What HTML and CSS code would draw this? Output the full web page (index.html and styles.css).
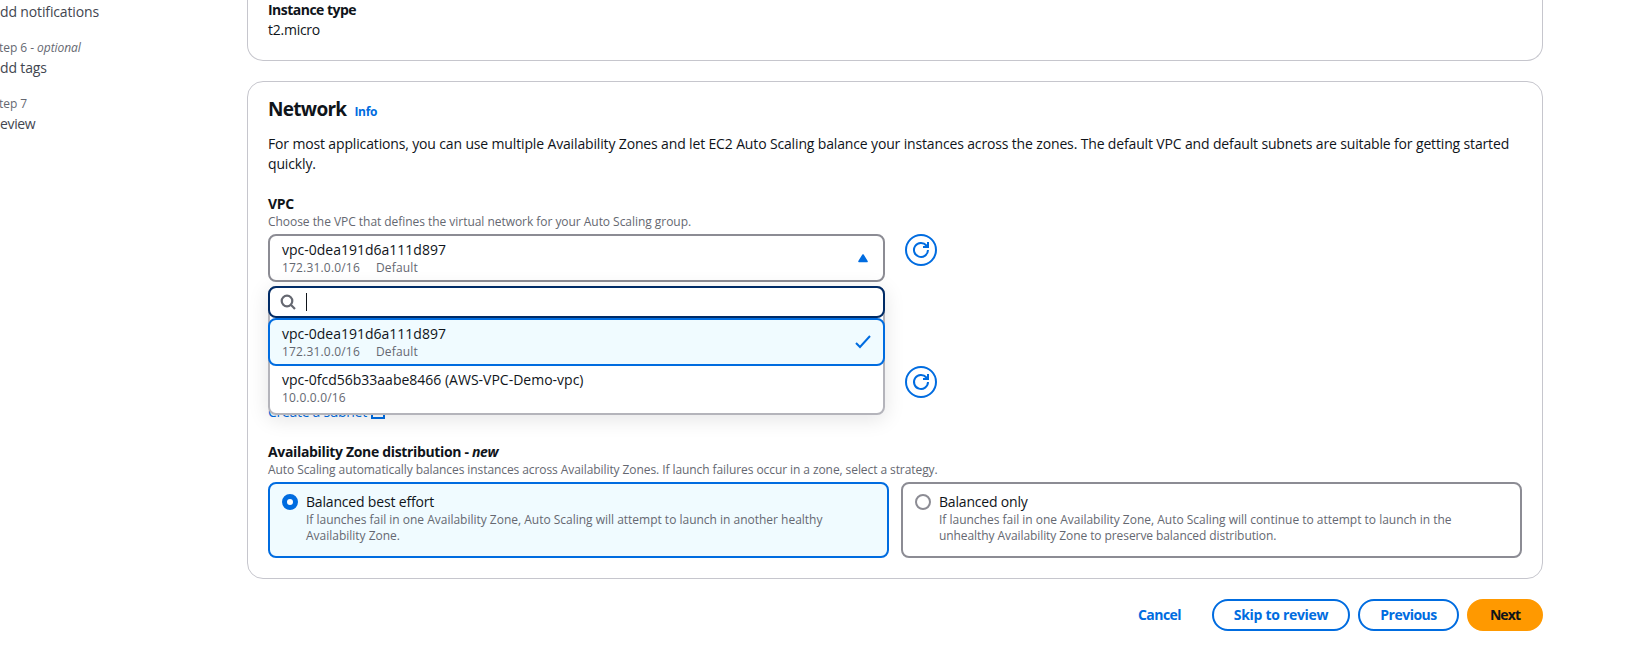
FILE: index.html
```html
<!DOCTYPE html>
<html lang="en">
<head>
<meta charset="utf-8">
<title>Create Auto Scaling group</title>
<link rel="stylesheet" href="styles.css">
</head>
<body>
<div class="layout">
  <nav class="steps">
    <div class="step"><a class="step-link">dd notifications</a></div>
    <div class="step"><span class="step-no">tep 6 - <i>optional</i></span><a class="step-link">dd tags</a></div>
    <div class="step"><span class="step-no">tep 7</span><a class="step-link step-short">eview</a></div>
  </nav>
  <main class="content">
    <section class="card card-top">
      <div class="label">Instance type</div>
      <div class="value">t2.micro</div>
    </section>

    <section class="card card-network">
      <header class="card-header"><h2>Network</h2><a class="info">Info</a></header>
      <p class="description">For most applications, you can use multiple Availability Zones and let EC2 Auto Scaling balance your instances across the zones. The default VPC and default subnets are suitable for getting started quickly.</p>

      <div class="field vpc">
        <div class="label label-short">VPC</div>
        <div class="hint">Choose the VPC that defines the virtual network for your Auto Scaling group.</div>
        <div class="field-row">
          <div class="select">
            <div class="trigger">
              <div>
                <div class="opt-label">vpc-0dea191d6a111d897</div>
                <div class="opt-tags"><span>172.31.0.0/16</span><span>Default</span></div>
              </div>
              <svg class="caret" viewBox="0 0 16 16"><path d="M4 11.500 8 5l4 6.500z" fill="#006ce0" stroke="#006ce0" stroke-width="1.600" stroke-linejoin="round"/></svg>
            </div>
            <div class="dropdown">
              <div class="search">
                <svg class="icon" viewBox="0 0 16 16" fill="none" stroke="#656871" stroke-width="2.200"><circle cx="7" cy="7" r="5.300"/><path d="m10.800 10.800 4.200 4.200"/></svg>
                <span class="cursor"></span>
              </div>
              <div class="option selected">
                <div>
                  <div class="opt-label">vpc-0dea191d6a111d897</div>
                  <div class="opt-tags"><span>172.31.0.0/16</span><span>Default</span></div>
                </div>
                <svg class="icon" viewBox="0 0 16 16" fill="none" stroke="#006ce0" stroke-width="2"><path d="m1 9 4 4 10-11"/></svg>
              </div>
              <div class="option">
                <div>
                  <div class="opt-label">vpc-0fcd56b33aabe8466 (AWS-VPC-Demo-vpc)</div>
                  <div class="opt-tags"><span>10.0.0.0/16</span></div>
                </div>
              </div>
            </div>
          </div>
          <button class="refresh" aria-label="Refresh"><svg viewBox="0 0 16 16" fill="none" stroke="#006ce0" stroke-width="2"><path d="M15 8a7 7 0 1 1-1.600-4.500L15 5"/><path d="M15 0v5h-5"/></svg></button>
        </div>
      </div>

      <div class="field subnets">
        <div class="field-row">
          <div class="select"></div>
          <button class="refresh" aria-label="Refresh"><svg viewBox="0 0 16 16" fill="none" stroke="#006ce0" stroke-width="2"><path d="M15 8a7 7 0 1 1-1.600-4.500L15 5"/><path d="M15 0v5h-5"/></svg></button>
        </div>
        <a class="create-link">Create a subnet <svg class="external" viewBox="0 0 16 16" fill="none" stroke="#006ce0" stroke-width="2"><path d="M14 8v6H2V2h6M10 1h5v5M15 1 7 9"/></svg></a>
      </div>

      <div class="field distribution">
        <div class="label label-long">Availability Zone distribution - <i>new</i></div>
        <div class="hint hint-long">Auto Scaling automatically balances instances across Availability Zones. If launch failures occur in a zone, select a strategy.</div>
        <div class="tiles">
          <div class="tile tile-on">
            <span class="radio radio-on"></span>
            <div>
              <div class="tile-label">Balanced best effort</div>
              <div class="tile-desc">If launches fail in one Availability Zone, Auto Scaling will attempt to launch in another healthy<br>Availability Zone.</div>
            </div>
          </div>
          <div class="tile">
            <span class="radio"></span>
            <div>
              <div class="tile-label">Balanced only</div>
              <div class="tile-desc">If launches fail in one Availability Zone, Auto Scaling will continue to attempt to launch in the<br><span class="tight">unhealthy Availability Zone to preserve balanced distribution.</span></div>
            </div>
          </div>
        </div>
      </div>
    </section>

    <footer class="actions">
      <button class="btn btn-link">Cancel</button>
      <button class="btn btn-skip">Skip to review</button>
      <button class="btn btn-prev">Previous</button>
      <button class="btn btn-primary">Next</button>
    </footer>
  </main>
</div>
</body>
</html>
```
FILE: styles.css
```css
* { box-sizing: border-box; }
body {
  margin: 0;
  background: #fff;
  color: #0f141a;
  font: 14px/20px "Open Sans", "Noto Sans", sans-serif;
  overflow: hidden;
}
svg { display: block; overflow: visible; }
button { font-family: inherit; margin: 0; padding: 0; }

.layout { display: flex; height: 668px; }
.steps { width: 247px; flex: none; padding-top: 2px; display: flex; flex-direction: column; gap: 18px; }
.step { display: flex; flex-direction: column; gap: 2px; white-space: nowrap; }
.step-no { font-size: 12px; line-height: 16px; color: #656871; margin-left: -1px; letter-spacing: -0.05px; }
.step-link { color: #424650; letter-spacing: -0.14px; }
.step-short { letter-spacing: -0.35px; }

.content { width: 1296px; flex: none; }
.card { border: 1px solid #c6c6cd; border-radius: 16px; background: #fff; }
.card-top { border-top: 0; border-radius: 0 0 16px 16px; padding: 0 20px 20px; margin-bottom: 20px; }
.card-network { padding: 15px 20px 20px; }
.label { font-weight: 700; letter-spacing: -0.52px; }
.label-short { letter-spacing: -0.27px; }
.label-long { letter-spacing: -0.34px; }
.value { letter-spacing: -0.25px; }
.card-header { display: flex; align-items: baseline; gap: 8px; height: 24px; }
.card-header h2 { margin: 0; font-size: 19px; line-height: 24px; font-weight: 700; letter-spacing: -0.7px; }
.info { font-size: 12px; line-height: 16px; font-weight: 700; color: #006ce0; letter-spacing: -0.35px; }
.description { margin: 13px 0 20px; letter-spacing: -0.148px; }
.hint { font-size: 12px; line-height: 16px; color: #656871; letter-spacing: -0.043px; margin-bottom: 4px; }
.hint-long { letter-spacing: -0.08px; }

.field-row { display: flex; gap: 20px; align-items: flex-start; }
.select { position: relative; width: 617px; flex: none; }
.trigger {
  height: 48px;
  border: 2px solid #8c8c94;
  border-radius: 8px;
  padding: 4px 12px;
  display: flex;
  align-items: center;
  justify-content: space-between;
}
.opt-label { white-space: nowrap; }
.opt-tags { display: flex; gap: 16px; font-size: 12px; line-height: 16px; color: #656871; letter-spacing: 0.18px; }
.icon, .caret { width: 16px; height: 16px; flex: none; }
.dropdown {
  position: absolute;
  z-index: 2;
  top: 52px;
  left: 0;
  width: 617px;
  height: 129px;
  border: 2px solid #b4b4bb;
  border-radius: 8px;
  background: #fff;
  box-shadow: 0 4px 20px 1px rgba(0, 7, 22, 0.1);
}
.search {
  height: 32px;
  margin: -2px -2px 0;
  border: 2px solid #002b66;
  border-radius: 8px;
  padding: 0 10px;
  display: flex;
  align-items: center;
  gap: 10px;
}
.cursor { width: 1px; height: 18px; background: #0f141a; }
.option {
  height: 48px;
  margin: 0 -2px;
  border: 2px solid transparent;
  border-radius: 8px;
  padding: 4px 12px;
  display: flex;
  align-items: center;
  justify-content: space-between;
}
.option + .option { margin-top: -2px; }
.selected { background: #f0fbff; border-color: #006ce0; }
.refresh {
  width: 32px;
  height: 32px;
  border: 2px solid #006ce0;
  border-radius: 50%;
  background: none;
  display: flex;
  align-items: center;
  justify-content: center;
}
.refresh svg { width: 16px; height: 16px; }

.subnets { margin-top: 84px; }
.create-link { display: flex; gap: 3px; margin-top: 4px; color: #006ce0; letter-spacing: -0.3px; }
.external { width: 16px; height: 16px; margin-top: 2px; }

.distribution { margin-top: 20px; }
.tiles { display: grid; grid-template-columns: 1fr 1fr; gap: 12px; }
.tile { height: 76px; border: 2px solid #8c8c94; border-radius: 8px; padding: 8px 12px; display: flex; gap: 8px; }
.tile-on { border-color: #006ce0; background: #f0fbff; }
.radio { width: 16px; height: 16px; flex: none; margin-top: 2px; border: 2px solid #8c8c94; border-radius: 50%; background: #fff; }
.radio-on { border: 5px solid #006ce0; }
.tile-label { letter-spacing: -0.18px; }
.tile-desc { font-size: 12px; line-height: 16px; color: #656871; letter-spacing: -0.01px; white-space: nowrap; }
.tight { letter-spacing: -0.08px; }

.actions { margin-top: 20px; display: flex; justify-content: flex-end; gap: 8px; }
.btn {
  height: 32px;
  border: 2px solid #006ce0;
  border-radius: 16px;
  background: #fff;
  color: #006ce0;
  font-size: 14px;
  line-height: 20px;
  font-weight: 700;
}
.btn-link { border-color: transparent; width: 89px; letter-spacing: -0.55px; }
.btn-skip { width: 138px; letter-spacing: -0.3px; }
.btn-prev { width: 101px; letter-spacing: -0.5px; }
.btn-primary { width: 76px; letter-spacing: -0.9px; background: #ff9900; border-color: #ff9900; color: #0f141a; }
```
